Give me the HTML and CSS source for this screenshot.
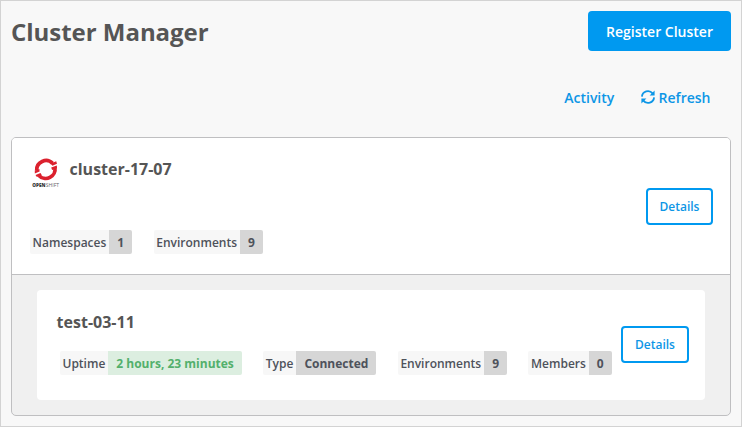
FILE: index.html
```html
<!DOCTYPE html>
<html lang="en">
<head>
<meta charset="utf-8">
<title>Cluster Manager</title>
<link rel="stylesheet" href="styles.css">
</head>
<body>
<main class="page">
  <header class="header">
    <h1 class="title">Cluster Manager</h1>
    <button class="btn-primary">Register Cluster</button>
  </header>
  <nav class="actions">
    <a class="link activity">Activity</a>
    <a class="link refresh">
      <svg class="refresh-icon" viewBox="0 0 14 14">
        <path fill="none" stroke="currentColor" stroke-width="1.8" d="M.9 6.6A6 6 0 0 1 11.6 3.4M13.1 7.4A6 6 0 0 1 2.4 10.6"/>
        <path fill="currentColor" d="M13.6.4v5H8.6zM.4 13.6v-5h5z"/>
      </svg>
      <span>Refresh</span>
    </a>
  </nav>
  <section class="cluster">
    <div class="cluster-main">
      <div class="cluster-info">
        <div class="cluster-heading">
          <svg class="logo" viewBox="0 0 30 32">
            <g fill="none" stroke="#db212e" stroke-width="3.7">
              <path d="M6.7 14.6A9.3 9.3 0 0 1 22.6 7.4"/>
              <path d="M24.9 11.4A9.3 9.3 0 0 1 8.9 19.4"/>
            </g>
            <path fill="#db212e" d="M20.8 7.4l5.4-2.2.8 2.6-4.6 1.9zM21.2 11.5l5.6-2.1.3 2.8-5 1.9zM4.8 14.8l4.6-1.8.2 2.5-4.8 1.9zM5.5 18.9l5-2 1.2 2-4.8 2.2z"/>
            <text class="logo-bold" x="2.3" y="30.9" textLength="13.2" lengthAdjust="spacingAndGlyphs">OPEN</text>
            <text class="logo-thin" x="15.8" y="30.9" textLength="13.2" lengthAdjust="spacingAndGlyphs">SHIFT</text>
          </svg>
          <h2 class="name">cluster-17-07</h2>
        </div>
        <div class="chips">
          <div class="chip"><span class="chip-label">Namespaces</span><span class="chip-value">1</span></div>
          <div class="chip"><span class="chip-label">Environments</span><span class="chip-value">9</span></div>
        </div>
      </div>
      <button class="btn-outline">Details</button>
    </div>
    <div class="members">
      <article class="member">
        <div class="member-info">
          <h2 class="name">test-03-11</h2>
          <div class="chips">
            <div class="chip"><span class="chip-label">Uptime</span><span class="chip-value good">2 hours, 23 minutes</span></div>
            <div class="chip"><span class="chip-label">Type</span><span class="chip-value">Connected</span></div>
            <div class="chip"><span class="chip-label">Environments</span><span class="chip-value">9</span></div>
            <div class="chip"><span class="chip-label">Members</span><span class="chip-value">0</span></div>
          </div>
        </div>
        <button class="btn-outline">Details</button>
      </article>
    </div>
  </section>
</main>
</body>
</html>
```

FILE: styles.css
```css
* { box-sizing: border-box; }
body {
  margin: 0;
  font-family: "Open Sans", sans-serif;
  color: #555;
}
h1, h2 { margin: 0; }
button { font-family: inherit; padding: 0; }
.page {
  width: 742px;
  height: 427px;
  padding: 10px;
  border: 1px solid #d3d3d3;
  background: #f8f8f8;
}
.header {
  display: flex;
  justify-content: space-between;
  height: 40px;
}
.title {
  font-size: 24px;
  font-weight: 700;
  line-height: 42px;
  letter-spacing: -0.03px;
}
.btn-primary {
  width: 143px;
  height: 40px;
  border: 0;
  border-radius: 4px;
  background: #0099f0;
  color: #fff;
  font-size: 14px;
  font-weight: 600;
}
.actions {
  display: flex;
  justify-content: flex-end;
  align-items: center;
  height: 22px;
  margin-top: 35px;
  padding-right: 20.5px;
}
.link {
  display: flex;
  align-items: center;
  color: #0d96e6;
  font-size: 14px;
  font-weight: 600;
}
.refresh { margin-left: 27px; }
.refresh-icon {
  width: 14px;
  height: 14px;
  margin-right: 3.3px;
}
.cluster {
  height: 279px;
  margin-top: 29px;
  border: 1px solid #bfbfc1;
  border-radius: 5px;
  background: #f0f0f0;
  overflow: hidden;
}
.cluster-main {
  display: flex;
  justify-content: space-between;
  align-items: center;
  height: 137px;
  padding: 18px 17px 18px 18px;
  border-bottom: 1px solid #bfbfc1;
  background: #fff;
}
.cluster-info { align-self: stretch; }
.cluster-heading { display: flex; height: 74px; }
.logo {
  width: 30px;
  height: 32px;
  margin-right: 9.5px;
}
.logo-bold, .logo-thin { font-size: 5px; fill: #333; }
.logo-bold { font-weight: 800; }
.logo-thin { fill: #666; font-weight: 400; }
.name {
  font-size: 16px;
  font-weight: 700;
  line-height: 26px;
}
.chips { display: flex; gap: 21.5px; }
.chip {
  display: flex;
  height: 24px;
  border-radius: 2px;
  overflow: hidden;
  font-size: 12px;
  line-height: 25px;
  color: #4e525b;
  white-space: nowrap;
}
.chip-label {
  padding: 0 3px 0 2.6px;
  background: #f7f7f7;
  font-weight: 600;
}
.chip-value {
  padding: 0 8px;
  background: #d6d6d6;
  font-weight: 700;
}
.good { background: #dceee0; color: #53b06c; }
.btn-outline {
  flex: none;
  width: 67px;
  height: 37px;
  border: 2px solid #0099f0;
  border-radius: 4px;
  background: #fff;
  color: #0d96e6;
  font-size: 12px;
  font-weight: 600;
}
.members { padding: 15px 25px; }
.member {
  display: flex;
  justify-content: space-between;
  align-items: center;
  height: 110px;
  padding: 0 16px 0 19.6px;
  border-radius: 4px;
  background: #fff;
}
.member .chips { margin: 16px 0 0 3.3px; gap: 21.4px; }
.member .btn-outline { width: 68px; margin-bottom: 1px; }
.member-info { padding-top: 15px; height: 102px; }
```
